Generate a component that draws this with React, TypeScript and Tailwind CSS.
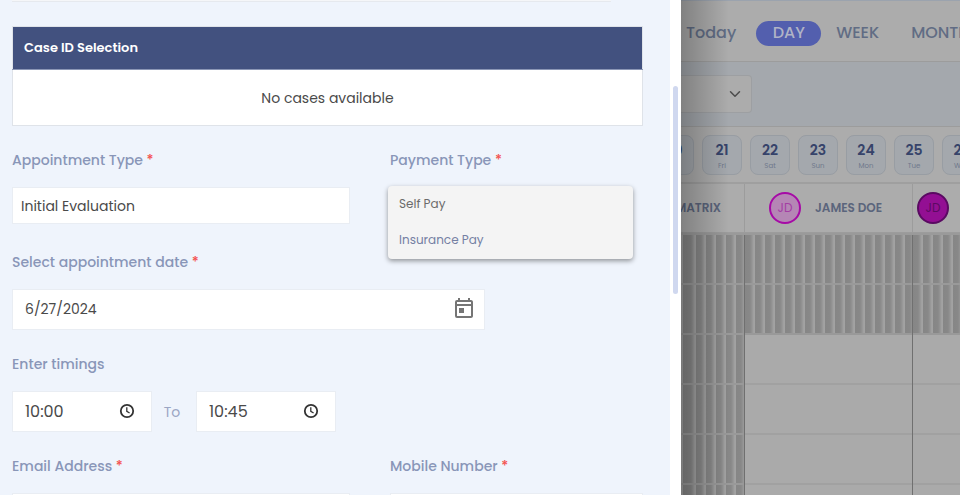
import clsx from "clsx";
import { MdOutlineToday } from "react-icons/md";
import { FiChevronDown } from "react-icons/fi";
import React, { useState } from "react";

const days = [
  { num: "20", name: "Thu" },
  { num: "21", name: "Fri" },
  { num: "22", name: "Sat" },
  { num: "23", name: "Sun" },
  { num: "24", name: "Mon" },
  { num: "25", name: "Tue" },
  { num: "26", name: "Wed" },
];

const slots = [0, 1, 2, 3, 4, 5];

const boxStyle = "w-full border border-[#e9edf3] bg-white text-[#4a4a4a] outline-none";
const hatch =
  "bg-[repeating-linear-gradient(90deg,#868686_0px,#888888_5px,#949494_7px,#a4a4a4_9px,#a0a0a0_10px)]";

const ClockIcon = () => (
  <svg viewBox="0 0 16 16" className="h-4 w-4" fill="none" stroke="#333333">
    <circle cx="8" cy="8" r="6.2" strokeWidth="1.8" />
    <path d="M7.8 4.2v4.1l2.8 1.7" strokeWidth="1.3" />
  </svg>
);

type FieldProps = {
  id: string;
  label: string;
  required?: boolean;
  children: React.ReactNode;
};

function Field({ id, label, required, children }: FieldProps) {
  return (
    <div className="flex flex-col gap-[15px]">
      <label htmlFor={id} className="text-sm leading-6 font-medium text-[#8996b8]">
        {label} {required && <span className="text-[#f4504d]">*</span>}
      </label>
      <div className="relative h-[41px]">{children}</div>
    </div>
  );
}

function TimeInput({ id, initial }: { id: string; initial: string }) {
  const [time, setTime] = useState(initial);
  return (
    <div className="relative w-[140px]">
      <input
        id={id}
        aria-label={id}
        value={time}
        onChange={(e) => setTime(e.target.value)}
        className={clsx(boxStyle, "h-[41px] px-3 text-base")}
      />
      <button type="button" aria-label="Pick time" className="absolute top-3 right-[17px]">
        <ClockIcon />
      </button>
    </div>
  );
}

function AppointmentForm() {
  const [date, setDate] = useState("6/27/2024");
  return (
    <div className="flex h-screen min-w-0 overflow-hidden bg-white">
      <form className="flex min-w-0 flex-1 flex-col gap-[22px] bg-[#eff4fc] pr-[27px] pl-3">
        <div className="mr-8 mb-0.5 h-0.5 shrink-0 border-b border-[#e6e9ee] bg-[#f5f6f8]" />

        <table className="h-[100px] w-full shrink-0 border-collapse border border-[#dfe3e9]">
          <thead>
            <tr className="h-[43px] bg-[#42517f]">
              <th className="border-b border-[#8b96b5] px-[11px] text-left text-[13px] font-semibold text-white">
                Case ID Selection
              </th>
            </tr>
          </thead>
          <tbody>
            <tr className="bg-white">
              <td className="text-center text-sm text-[#4a4a4a]">No cases available</td>
            </tr>
          </tbody>
        </table>

        <div className="grid grid-cols-[338fr_253fr] gap-10">
          <Field id="type" label="Appointment Type" required>
            <select id="type" className={clsx(boxStyle, "h-[37px] appearance-none px-2 text-sm")}>
              <option>Initial Evaluation</option>
            </select>
          </Field>
          <Field id="payment" label="Payment Type" required>
            <select
              id="payment"
              size={2}
              className="absolute -top-px -left-0.5 h-[73px] w-[245px] appearance-none overflow-hidden rounded bg-[#f4f4f4] text-xs shadow-[0_2px_5px_rgba(0,0,0,0.4)] outline-none"
            >
              <option className="h-9 px-[11px] pt-[9px] leading-5 text-[#6b6b6b]">Self Pay</option>
              <option className="h-9 px-[11px] pt-[9px] leading-5 text-[#7480a3]">Insurance Pay</option>
            </select>
          </Field>
        </div>

        <Field id="date" label="Select appointment date" required>
          <div className="relative w-3/4">
            <input
              id="date"
              value={date}
              onChange={(e) => setDate(e.target.value)}
              className={clsx(boxStyle, "h-[41px] px-3 text-sm")}
            />
            <button type="button" aria-label="Open calendar" className="absolute top-2 right-[9px]">
              <MdOutlineToday className="h-6 w-6 text-[#757575]" />
            </button>
          </div>
        </Field>

        <Field id="start" label="Enter timings">
          <div className="flex items-center">
            <TimeInput id="start" initial="10:00" />
            <span className="w-11 pr-1 text-center text-sm text-[#9ba6c4]">To</span>
            <TimeInput id="end" initial="10:45" />
          </div>
        </Field>

        <div className="grid grid-cols-[338fr_253fr] gap-10">
          <Field id="email" label="Email Address" required>
            <input id="email" className={clsx(boxStyle, "h-[41px] px-3")} />
          </Field>
          <Field id="mobile" label="Mobile Number" required>
            <input id="mobile" className={clsx(boxStyle, "h-[41px] px-3")} />
          </Field>
        </div>
      </form>
      <div className="w-[11px] pt-[86px] pl-[3px]">
        <div className="h-[208px] w-[5px] rounded-full bg-[#d0d8ef]" />
      </div>
    </div>
  );
}

function Avatar({ className }: { className: string }) {
  return (
    <span
      className={clsx(
        "flex h-8 w-8 shrink-0 items-center justify-center rounded-full border-2 text-xs font-normal",
        className
      )}
    >
      JD
    </span>
  );
}

function DoctorColumn({ header, blocked, className }: { header: React.ReactNode; blocked: number; className: string }) {
  return (
    <div className={clsx("flex flex-col", className)}>
      <div className="flex h-[49px] shrink-0 items-center border-r border-b border-[#9c9c9c] text-xs font-semibold whitespace-nowrap text-[#5b657c]">
        {header}
      </div>
      <div className="border-t-2 border-[#9a9a9a]">
        {slots.map((slot) => (
          <div
            key={slot}
            className={clsx(
              "h-[50px] border-r border-r-[#707070]",
              slot < blocked ? hatch : "bg-[#aaaaaa]",
              blocked > 2 && "bg-[position:5px_0]"
            )}
          >
            <div className={clsx("h-full border-b-2", slot < blocked ? "border-[#999999]" : "border-[#a1a1a1]")} />
          </div>
        ))}
      </div>
    </div>
  );
}

function Calendar() {
  return (
    <div className="relative flex h-screen min-w-0 flex-col overflow-hidden bg-[#acacac]">
      <div className="flex h-[62px] shrink-0 items-center border-t border-b border-t-[#9ba3ae] border-b-[#9c9c9c] pt-1 pl-[5px] text-base font-medium text-[#616c84]">
        <button>Today</button>
        <button className="ml-5 h-[25px] w-[65px] shrink-0 rounded-full bg-[#535fae] text-[#b0b4c6]">DAY</button>
        <button className="ml-[15px]">WEEK</button>
        <button className="ml-8">MONTH</button>
      </div>

      <div className="flex h-[65px] shrink-0 items-center border-b border-[#9c9c9c] bg-[#a4a8ad]">
        <button
          aria-label="Filter"
          className="flex h-[38px] w-[71px] items-center justify-end rounded-r border border-l-0 border-[#9d9fa2] bg-[#acacac] pr-[7px]"
        >
          <FiChevronDown className="h-[18px] w-[18px] text-[#4c4c4c]" />
        </button>
      </div>

      <div className="flex h-[57px] shrink-0 justify-start gap-2 border-b-2 border-[#9f9f9f] pt-2">
        {days.map((day) => (
          <button
            key={day.num}
            className="flex h-10 w-10 shrink-0 flex-col items-center rounded-lg border border-[#989da3] bg-[#a4a8ad] pt-1 first:-ml-[27px]"
          >
            <span className="text-[14px] leading-5 font-semibold text-[#36436a]">{day.num}</span>
            <span className="text-[7px] leading-3 text-[#6f788c]">{day.name}</span>
          </button>
        ))}
      </div>

      <div className="flex">
        <DoctorColumn
          className="w-16 shrink-0"
          blocked={6}
          header={<span className="flex w-full justify-end pr-[23px]">MATRIX</span>}
        />
        <DoctorColumn
          className="w-[168px] shrink-0"
          blocked={2}
          header={
            <>
              <Avatar className="mr-[14px] ml-6 border-[#a60aa6] bg-[#b586b5] text-[#a43da4]" />
              JAMES DOE
            </>
          }
        />
        <DoctorColumn
          className="w-[168px] shrink-0"
          blocked={2}
          header={<Avatar className="ml-1 border-[#5a0a62] bg-[#930f93] text-[#5a0a62]" />}
        />
      </div>

      <div className="pointer-events-none absolute inset-y-0 left-0 w-12 bg-linear-to-r from-black/25 to-transparent" />
    </div>
  );
}

export default function App() {
  return (
    <main className="grid grid-cols-[681fr_279fr] font-[Poppins,Inter,sans-serif]">
      <AppointmentForm />
      <Calendar />
    </main>
  );
}
